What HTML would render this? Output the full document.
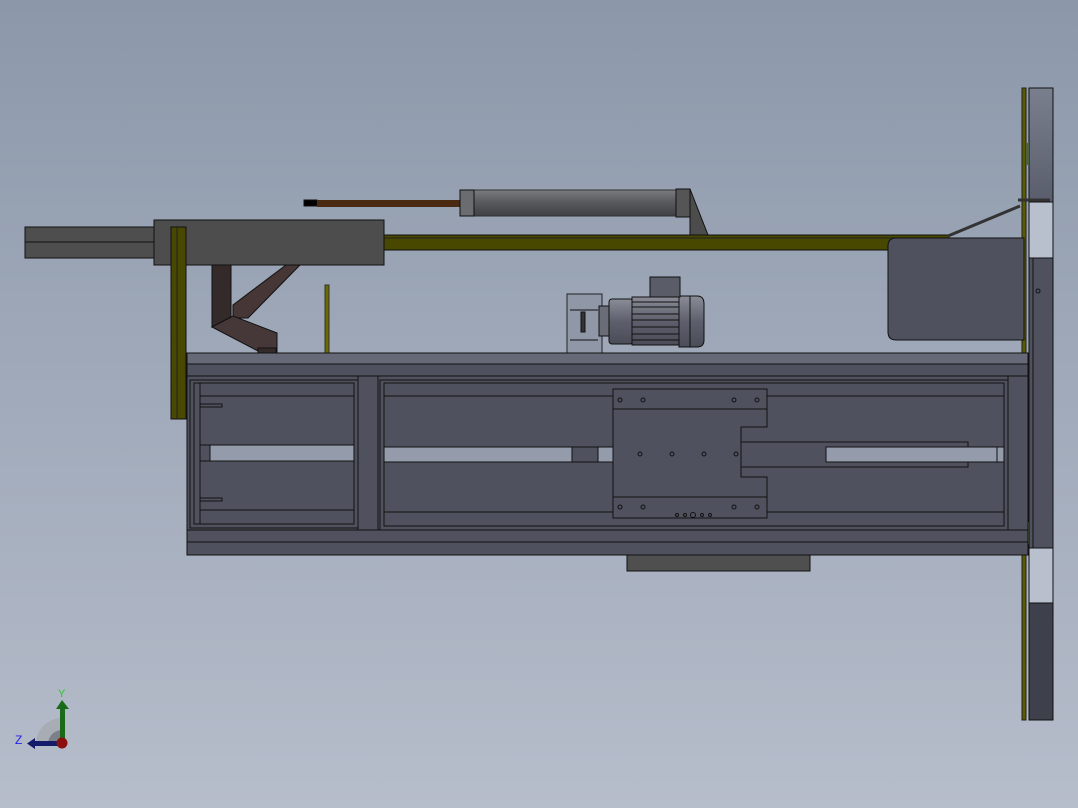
<!DOCTYPE html>
<html><head><meta charset="utf-8"><style>
html,body{margin:0;padding:0}
body{width:1078px;height:808px;overflow:hidden;background:linear-gradient(#8c98aa,#b6bdcb);font-family:"Liberation Sans",sans-serif}
svg{display:block}
</style></head><body>
<svg width="1078" height="808" viewBox="0 0 1078 808" xmlns="http://www.w3.org/2000/svg">
<defs>
<linearGradient id="cyl" x1="0" y1="0" x2="0" y2="1"><stop offset="0" stop-color="#7a7c80"/><stop offset="0.4" stop-color="#5c5e62"/><stop offset="1" stop-color="#3e4044"/></linearGradient>
<linearGradient id="mot" x1="0" y1="0" x2="0" y2="1"><stop offset="0" stop-color="#8a8d98"/><stop offset="0.5" stop-color="#5d606c"/><stop offset="1" stop-color="#4a4d58"/></linearGradient>
<linearGradient id="colT" x1="0" y1="0" x2="0" y2="1"><stop offset="0" stop-color="#7a7f8e"/><stop offset="1" stop-color="#5a5e6c"/></linearGradient>
</defs>
<g stroke="#111" stroke-width="1">
<!-- right column -->
<rect x="1022" y="88" width="4" height="632" fill="#5a5a00" stroke="#222"/>
<rect x="1029" y="88" width="24" height="114" fill="url(#colT)"/>
<rect x="1029" y="202" width="24" height="56" fill="#b8c0ce"/>
<rect x="1029" y="258" width="24" height="290" fill="#4f525e"/>
<line x1="1033" y1="258" x2="1033" y2="548"/>
<circle cx="1038" cy="291" r="2" fill="none"/>
<rect x="1029" y="548" width="24" height="55" fill="#b8c0ce"/>
<rect x="1029" y="603" width="24" height="117" fill="#3e414b"/>
<rect x="1026" y="143" width="3" height="22" fill="#4d6040" stroke="none"/>
<rect x="1026" y="522" width="3" height="22" fill="#4d6040" stroke="none"/>
<!-- cylinder -->
<rect x="304" y="200" width="13" height="6" fill="#000"/>
<rect x="317" y="200" width="143" height="7" fill="#4a2a10" stroke="none"/>
<rect x="460" y="190" width="218" height="26" fill="url(#cyl)" stroke="#333"/>
<rect x="460" y="190" width="14" height="26" fill="#6a6c70"/>
<rect x="676" y="189" width="14" height="28" fill="#555"/>
<polygon points="690,189 708,235 690,235" fill="#4c4c4c"/>
<!-- yellow horizontal -->
<rect x="384" y="235" width="565" height="15" fill="#484800"/>
<line x1="384" y1="238" x2="949" y2="238" stroke="#222"/>
<!-- arm strut -->
<line x1="948" y1="236" x2="1020" y2="206" stroke="#333" stroke-width="3"/>
<line x1="1018" y1="200" x2="1050" y2="200" stroke="#333" stroke-width="3"/>
<!-- right box -->
<path d="M896,238 H1024 V340 H896 Q888,340 888,332 V246 Q888,238 896,238 Z" fill="#4f525e"/>
<!-- left beam & box -->
<rect x="25" y="227" width="146" height="31" fill="#4e4e4e"/>
<line x1="25" y1="242" x2="168" y2="242"/>
<rect x="154" y="220" width="230" height="45" fill="#4d4d4d"/>
<rect x="171" y="227" width="15" height="192" fill="#484800"/>
<line x1="177" y1="227" x2="177" y2="419" stroke="#222"/>
<!-- brown bracket -->
<polygon points="212,265 231,265 231,317 212,327" fill="#352a2a"/>
<polygon points="286,265 300,265 248,318 233,318 233,305" fill="#463636"/>
<polygon points="212,327 233,316 277,333 277,352 260,352" fill="#463838"/>
<rect x="258" y="348" width="18" height="6" fill="#352a2a"/>
<!-- thin yellow rod -->
<rect x="325" y="285" width="4" height="70" fill="#6a6a00" stroke="#333"/>
<rect x="325" y="447" width="4" height="14" fill="#6a6a00" stroke="none"/>
<!-- motor -->
<rect x="567" y="294" width="35" height="59" fill="#9098a8" stroke="#222"/>
<line x1="570" y1="310" x2="598" y2="310"/>
<line x1="570" y1="340" x2="598" y2="340"/>
<rect x="581" y="312" width="4" height="20" fill="#333"/>
<rect x="599" y="306" width="10" height="30" fill="#6a6d78"/>
<rect x="609" y="299" width="24" height="45" fill="url(#mot)" rx="3"/>
<rect x="632" y="297" width="47" height="48" fill="url(#mot)"/>
<g stroke="#111"><line x1="632" y1="302" x2="679" y2="302"/><line x1="632" y1="307" x2="679" y2="307"/><line x1="632" y1="314" x2="679" y2="314"/><line x1="632" y1="320" x2="679" y2="320"/><line x1="632" y1="327" x2="679" y2="327"/><line x1="632" y1="334" x2="679" y2="334"/><line x1="632" y1="340" x2="679" y2="340"/></g>
<path d="M679,296 H697 Q704,296 704,304 V340 Q704,347 697,347 H679 Z" fill="url(#mot)"/>
<line x1="690" y1="296" x2="690" y2="347"/>
<rect x="650" y="277" width="30" height="20" fill="#5a5d68"/>
<!-- table top -->
<rect x="187" y="353" width="841" height="11" fill="#666a78"/>
<rect x="187" y="364" width="841" height="12" fill="#4f525e"/>
<!-- frame -->
<rect x="187" y="376" width="841" height="179" fill="#4f525e"/>
<rect x="190" y="380" width="168" height="148" fill="#4f525e"/>
<rect x="194" y="383" width="160" height="141" fill="#4f525e"/>
<line x1="200" y1="396" x2="354" y2="396"/>
<line x1="200" y1="510" x2="354" y2="510"/>
<line x1="200" y1="383" x2="200" y2="524"/>
<rect x="200" y="445" width="154" height="16" fill="#949cab"/>
<rect x="200" y="445" width="10" height="16" fill="#4f525e"/>
<rect x="200" y="404" width="22" height="3" fill="#4f525e"/>
<rect x="200" y="498" width="22" height="3" fill="#4f525e"/>
<rect x="358" y="376" width="20" height="154" fill="#4f525e"/>
<rect x="380" y="380" width="628" height="150" fill="#4f525e"/>
<rect x="384" y="383" width="620" height="143" fill="#4f525e"/>
<line x1="384" y1="396" x2="1004" y2="396"/>
<line x1="384" y1="512" x2="1004" y2="512"/>
<rect x="384" y="447" width="620" height="15" fill="#949cab"/>
<rect x="572" y="447" width="26" height="15" fill="#4f525e"/>
<rect x="741" y="442" width="227" height="25" fill="#4f525e"/>
<rect x="826" y="447" width="171" height="15" fill="#949cab"/>
<rect x="1008" y="376" width="20" height="154" fill="#4f525e"/>
<rect x="187" y="530" width="841" height="25" fill="#4f525e"/>
<line x1="187" y1="542" x2="1028" y2="542"/>
<!-- slide plate -->
<path d="M613,389 H767 V427 H741 V477 H767 V518 H613 Z" fill="#4f525e"/>
<line x1="613" y1="409" x2="767" y2="409"/>
<line x1="613" y1="497" x2="767" y2="497"/>
<g fill="none" stroke="#111">
<circle cx="620" cy="400" r="2"/><circle cx="643" cy="400" r="2"/><circle cx="734" cy="400" r="2"/><circle cx="757" cy="400" r="2"/>
<circle cx="620" cy="507" r="2"/><circle cx="643" cy="507" r="2"/><circle cx="734" cy="507" r="2"/><circle cx="757" cy="507" r="2"/>
<circle cx="640" cy="454" r="2"/><circle cx="672" cy="454" r="2"/><circle cx="704" cy="454" r="2"/><circle cx="736" cy="454" r="2"/>
<circle cx="677" cy="515" r="1.5"/><circle cx="685" cy="515" r="1.5"/><circle cx="693" cy="515" r="2.5"/><circle cx="702" cy="515" r="1.5"/><circle cx="710" cy="515" r="1.5"/>
</g>
<!-- bottom block -->
<rect x="627" y="555" width="183" height="16" fill="#4f4f4f"/>
</g>
<!-- triad -->
<path d="M36,744 A26,26 0 0 1 62,718 V744 Z" fill="#a8acb4"/>
<path d="M48,744 A14,14 0 0 1 62,730 V744 Z" fill="#7c8088"/>
<rect x="60" y="707" width="5" height="37" fill="#1a6a1a"/>
<polygon points="56,709 62,700 69,709" fill="#1a6a1a"/>
<rect x="34" y="741" width="28" height="5" fill="#151a6a"/>
<polygon points="35,738 27,743.5 35,749" fill="#151a6a"/>
<circle cx="62" cy="743" r="5.5" fill="#8a1010"/>
<text x="58" y="697" font-size="11" fill="#22cc22">Y</text>
<text x="15" y="744" font-size="12" fill="#2222ee">Z</text>
</svg>
</body></html>
